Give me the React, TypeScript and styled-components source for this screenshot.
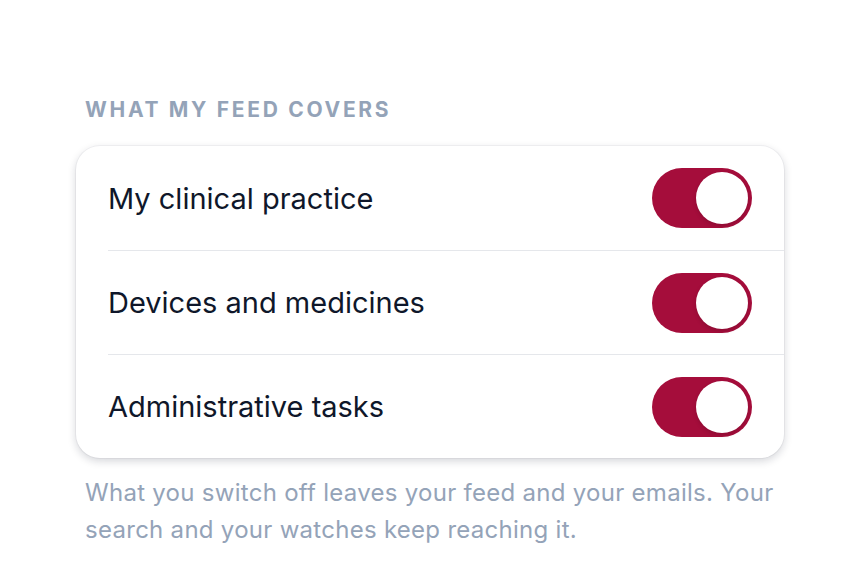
import React, { useState } from 'react';
import styled, { createGlobalStyle } from 'styled-components';

const Global = createGlobalStyle`
  html, body { margin: 0; background: #ffffff; }
  body { font-family: Inter, "Noto Sans", sans-serif; -webkit-font-smoothing: antialiased; }
`;

const Page = styled.div`
  width: 708px;
  padding: 96px 0 0 76px;
`;

const Heading = styled.h2`
  margin: 0 0 22px;
  padding: 0 9px;
  font-size: 21px;
  line-height: 28px;
  font-weight: 700;
  letter-spacing: 2.7px;
  text-transform: uppercase;
  color: #94a3b8;
`;

const Card = styled.div`
  background: #ffffff;
  border-radius: 24px;
  box-shadow: 0 0 0 1px rgba(15, 23, 42, 0.04), 0 3px 9px rgba(15, 23, 42, 0.18);
  overflow: hidden;
`;

const Row = styled.label<{ $first: boolean }>`
  display: flex;
  align-items: center;
  justify-content: space-between;
  height: 104px;
  padding: 0 32px;
  box-sizing: border-box;
  cursor: pointer;
  border-top: ${(p) => (p.$first ? 'none' : '1px solid #e5e7eb')};
  margin-left: ${(p) => (p.$first ? '0' : '32px')};
  padding-left: ${(p) => (p.$first ? '32px' : '0')};
`;

const Label = styled.span`
  font-size: 29px;
  color: #0f172a;
`;

const Track = styled.span<{ $on: boolean }>`
  width: 100px;
  height: 60px;
  border-radius: 30px;
  background: ${(p) => (p.$on ? '#a50d3b' : '#e2e8f0')};
  position: relative;
  flex-shrink: 0;
  transition: background 0.2s;
`;

const Knob = styled.span<{ $on: boolean }>`
  position: absolute;
  top: 4px;
  left: ${(p) => (p.$on ? '44px' : '4px')};
  width: 52px;
  height: 52px;
  border-radius: 50%;
  background: #ffffff;
  box-shadow: 0 2px 4px rgba(0, 0, 0, 0.15);
  transition: left 0.2s;
`;

const Note = styled.p`
  margin: 16px 0 0;
  padding: 0 9px;
  font-size: 24px;
  line-height: 37px;
  letter-spacing: 0.28px;
  color: #94a3b8;
`;

const topics = ['My clinical practice', 'Devices and medicines', 'Administrative tasks'];

export default function App() {
  const [on, setOn] = useState<boolean[]>([true, true, true]);
  return (
    <Page>
      <Global />
      <Heading>What my feed covers</Heading>
      <Card>
        {topics.map((t, i) => (
          <Row
            key={t}
            $first={i === 0}
            onClick={() => setOn(on.map((v, j) => (j === i ? !v : v)))}
          >
            <Label>{t}</Label>
            <Track $on={on[i]}>
              <Knob $on={on[i]} />
            </Track>
          </Row>
        ))}
      </Card>
      <Note>
        What you switch off leaves your feed and your emails. Your search and your watches keep
        reaching it.
      </Note>
    </Page>
  );
}
